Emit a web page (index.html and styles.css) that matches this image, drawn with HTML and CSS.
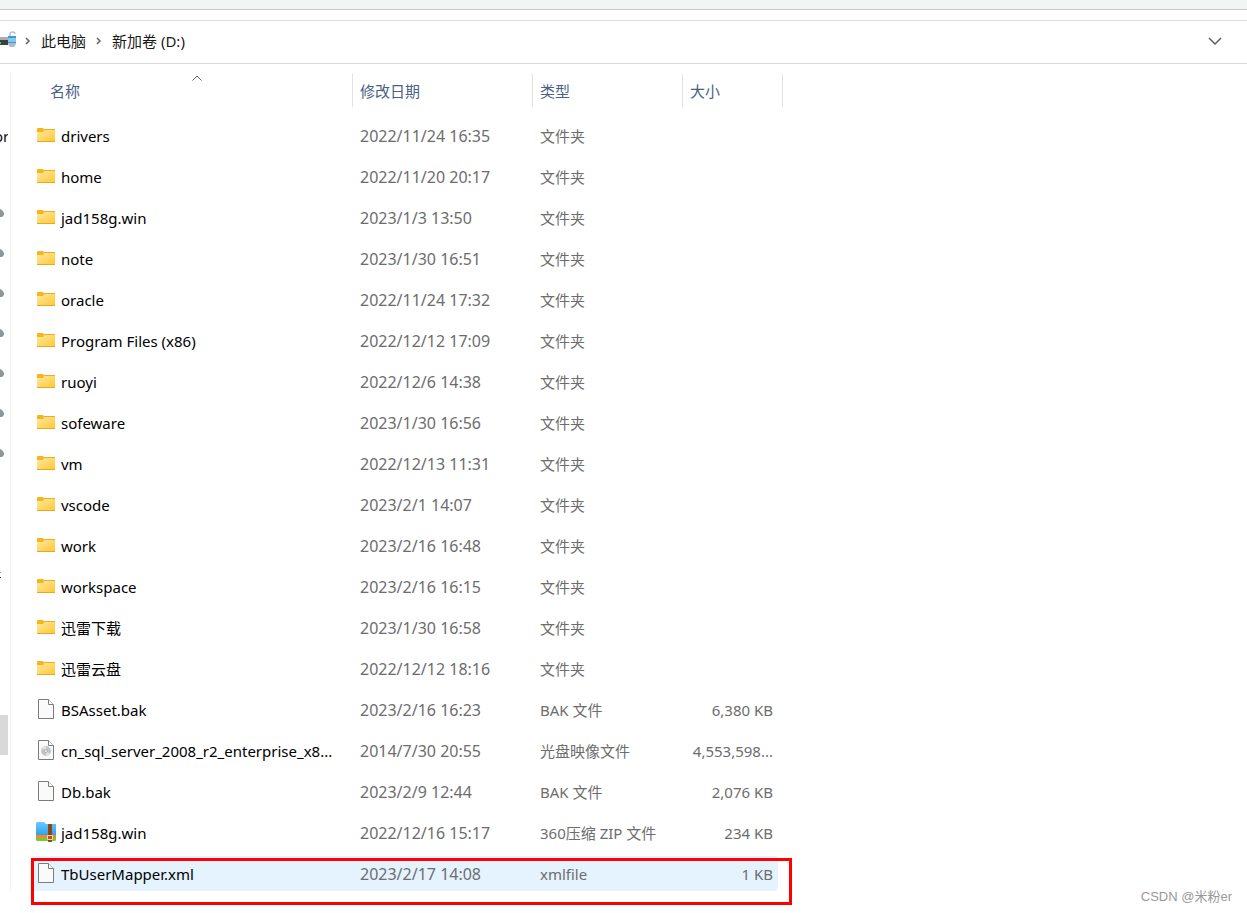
FILE: index.html
```html
<!DOCTYPE html>
<html lang="zh-CN">
<head>
<meta charset="utf-8">
<title>新加卷 (D:)</title>
<link rel="stylesheet" href="styles.css">
</head>
<body>
<svg class="defs" aria-hidden="true">
  <defs>
    <linearGradient id="folder-fill" x1="0" y1="0" x2="1" y2="1"><stop offset="0" stop-color="#ffe9a4"/><stop offset="1" stop-color="#ffc937"/></linearGradient>
    <linearGradient id="zip-fill" x1="0" y1="0" x2="0" y2="1"><stop offset="0" stop-color="#6cc8fb"/><stop offset="1" stop-color="#2da2f3"/></linearGradient>
    <symbol id="folder" viewBox="0 -1 20 20">
      <path d="M1 3q0-1 1-1h5l1 1.500V6H1z" fill="#f9b41c"/>
      <path d="M1 6h6l2-2.500h10V15H1z" fill="url(#folder-fill)"/>
      <path d="M8 3.500h11" stroke="#efae22" fill="none"/>
      <path d="M1 15.500h18" stroke="#e9a820" fill="none"/>
    </symbol>
    <symbol id="file" viewBox="0 0 20 20">
      <path d="M2.500.5h10l5 5v14h-15z" fill="#fafafa" stroke="#7c7c7c"/>
      <path d="M12.500.5v5h5" fill="#fff" stroke="#7c7c7c"/>
    </symbol>
    <symbol id="disc" viewBox="0 0 20 20">
      <path d="M2.500.5h10l5 5v14h-15z" fill="#fafafa" stroke="#7c7c7c"/>
      <path d="M12.500.5v5h5" fill="#fff" stroke="#7c7c7c"/>
      <circle cx="10" cy="11" r="5" fill="#c3c6c8"/>
      <path d="M10 11L6 8a5 5 0 0 1 4-2zM10 11l4 3a5 5 0 0 1-4 2z" fill="#e3e4e5"/>
      <circle cx="10" cy="11" r="1.500" fill="#fff" stroke="#aaa"/>
    </symbol>
    <symbol id="zip" viewBox="0 0 20 20">
      <path d="M0 2h20v15.500q0 1.500-1.500 1.500h-17Q0 19 0 17.500z" fill="#76c83c"/>
      <path d="M0 2h20v14H0z" fill="#f58a22"/>
      <path d="M0 1.500Q0 0 1.500 0H8l2 2h8.500Q20 2 20 3.500V13H0z" fill="url(#zip-fill)"/>
      <path d="M12 2h4v18h-4z" fill="#8f4a20"/>
      <path d="M14 3v10" stroke="#69330f" stroke-dasharray="1 1" fill="none"/>
      <path d="M11.500 13.500h5v4h-5z" fill="#a65a25" stroke="#f8d59a"/>
    </symbol>
    <symbol id="pin" viewBox="0 0 5 10"><path d="M0 1l2 1 2 3v2l-2 2H0z" fill="#8d969d"/></symbol>
  </defs>
</svg>

<div class="tabstrip"></div>
<div class="toolbar-gap"></div>
<header class="address">
  <svg class="drive" viewBox="0 0 17 18" aria-hidden="true">
    <path d="M0 6h8v3H0z" fill="#a9adb1"/><path d="M0 9h8v5H0z" fill="#3c3f42"/><path d="M0 11h1v2H0z" fill="#28e03b"/>
    <path d="M10 6V3q0-2 2.500-2T15 3" fill="none" stroke="#b9c3cb" stroke-width="1.500"/>
    <path d="M8 5h8v8l-2 3h-4l-2-3z" fill="#a9bccb"/><path d="M8 5h8v2H8zM8 11h8v1H8z" fill="#2d9ee4"/><path d="M8 7h8v4H8z" fill="#8fc5ea"/>
  </svg>
  <svg class="sep" viewBox="0 0 6 8" aria-hidden="true"><path d="M1 1l3 3-3 3"/></svg>
  <a class="crumb" href="#">此电脑</a>
  <svg class="sep" viewBox="0 0 6 8" aria-hidden="true"><path d="M1 1l3 3-3 3"/></svg>
  <a class="crumb" href="#">新加卷 (D:)</a>
  <button class="history" type="button" aria-label="以前的位置"><svg viewBox="0 0 14 8" aria-hidden="true"><path d="M1 1l6 6 6-6"/></svg></button>
</header>

<div class="body">
  <nav class="side">
    <div class="side-item"><span>or</span></div>
    <div class="pins">
      <div class="side-item"><svg><use href="#pin"/></svg></div>
      <div class="side-item"><svg><use href="#pin"/></svg></div>
      <div class="side-item"><svg><use href="#pin"/></svg></div>
      <div class="side-item"><svg><use href="#pin"/></svg></div>
      <div class="side-item"><svg><use href="#pin"/></svg></div>
      <div class="side-item"><svg><use href="#pin"/></svg></div>
      <div class="side-item"><svg><use href="#pin"/></svg></div>
    </div>
    <div class="side-item device"><i></i></div>
    <div class="side-item current"></div>
  </nav>

  <main class="files">
    <div class="list">
      <table>
        <colgroup><col class="c-name"><col class="c-date"><col class="c-type"><col class="c-size"></colgroup>
        <thead><tr>
          <th><div class="head name-head">名称<svg class="sort" viewBox="0 0 10 6" aria-hidden="true"><path d="M.5 5.500L5 1l4.500 4.500"/></svg></div></th>
          <th><div class="head">修改日期</div></th><th><div class="head">类型</div></th><th><div class="head">大小</div></th>
        </tr></thead>
        <tbody>
          <tr><td><div class="name"><svg><use href="#folder"/></svg><span>drivers</span></div></td><td class="date">2022/11/24 16:35</td><td>文件夹</td><td></td></tr>
          <tr><td><div class="name"><svg><use href="#folder"/></svg><span>home</span></div></td><td class="date">2022/11/20 20:17</td><td>文件夹</td><td></td></tr>
          <tr><td><div class="name"><svg><use href="#folder"/></svg><span>jad158g.win</span></div></td><td class="date">2023/1/3 13:50</td><td>文件夹</td><td></td></tr>
          <tr><td><div class="name"><svg><use href="#folder"/></svg><span>note</span></div></td><td class="date">2023/1/30 16:51</td><td>文件夹</td><td></td></tr>
          <tr><td><div class="name"><svg><use href="#folder"/></svg><span>oracle</span></div></td><td class="date">2022/11/24 17:32</td><td>文件夹</td><td></td></tr>
          <tr><td><div class="name"><svg><use href="#folder"/></svg><span>Program Files (x86)</span></div></td><td class="date">2022/12/12 17:09</td><td>文件夹</td><td></td></tr>
          <tr><td><div class="name"><svg><use href="#folder"/></svg><span>ruoyi</span></div></td><td class="date">2022/12/6 14:38</td><td>文件夹</td><td></td></tr>
          <tr><td><div class="name"><svg><use href="#folder"/></svg><span>sofeware</span></div></td><td class="date">2023/1/30 16:56</td><td>文件夹</td><td></td></tr>
          <tr><td><div class="name"><svg><use href="#folder"/></svg><span>vm</span></div></td><td class="date">2022/12/13 11:31</td><td>文件夹</td><td></td></tr>
          <tr><td><div class="name"><svg><use href="#folder"/></svg><span>vscode</span></div></td><td class="date">2023/2/1 14:07</td><td>文件夹</td><td></td></tr>
          <tr><td><div class="name"><svg><use href="#folder"/></svg><span>work</span></div></td><td class="date">2023/2/16 16:48</td><td>文件夹</td><td></td></tr>
          <tr><td><div class="name"><svg><use href="#folder"/></svg><span>workspace</span></div></td><td class="date">2023/2/16 16:15</td><td>文件夹</td><td></td></tr>
          <tr><td><div class="name"><svg><use href="#folder"/></svg><span>迅雷下载</span></div></td><td class="date">2023/1/30 16:58</td><td>文件夹</td><td></td></tr>
          <tr><td><div class="name"><svg><use href="#folder"/></svg><span>迅雷云盘</span></div></td><td class="date">2022/12/12 18:16</td><td>文件夹</td><td></td></tr>
          <tr><td><div class="name"><svg><use href="#file"/></svg><span>BSAsset.bak</span></div></td><td class="date">2023/2/16 16:23</td><td>BAK 文件</td><td>6,380 KB</td></tr>
          <tr><td><div class="name"><svg><use href="#disc"/></svg><span>cn_sql_server_2008_r2_enterprise_x8...</span></div></td><td class="date">2014/7/30 20:55</td><td>光盘映像文件</td><td>4,553,598...</td></tr>
          <tr><td><div class="name"><svg><use href="#file"/></svg><span>Db.bak</span></div></td><td class="date">2023/2/9 12:44</td><td>BAK 文件</td><td>2,076 KB</td></tr>
          <tr><td><div class="name"><svg><use href="#zip"/></svg><span>jad158g.win</span></div></td><td class="date">2022/12/16 15:17</td><td>360压缩 ZIP 文件</td><td>234 KB</td></tr>
          <tr class="active"><td><div class="name"><svg><use href="#file"/></svg><span>TbUserMapper.xml</span></div></td><td class="date">2023/2/17 14:08</td><td>xmlfile</td><td>1 KB</td></tr>
        </tbody>
      </table>
      <div class="callout"></div>
    </div>
  </main>
</div>
<div class="watermark">CSDN @米粉er</div>
</body>
</html>
```
FILE: styles.css
```css
* { box-sizing: border-box; }
body {
  position: relative;
  min-height: 100vh;
  margin: 0;
  background: #fff;
  color: #111;
  font: 15px/20px "Noto Sans", "Noto Sans CJK SC", sans-serif;
}
svg { display: block; flex: none; }
.defs { position: absolute; width: 0; height: 0; }

.tabstrip { height: 10px; background: #f3f4f4; border-bottom: 1px solid #c9cbcb; }
.toolbar-gap { height: 11px; border-bottom: 1px solid #dcdcdc; }
.address {
  display: flex;
  align-items: center;
  height: 43px;
  padding: 0 25px 2px 0;
  border-bottom: 1px solid #d9d9d9;
}
.drive { width: 17px; height: 18px; margin: 0 8px 2px 0; }
.sep { width: 6px; height: 8px; fill: none; stroke: #666; stroke-width: 1.5; }
.crumb { margin: 0 10px; color: #1a1a1a; text-decoration: none; }
.history { margin-left: auto; padding: 0; border: 0; background: none; }
.history svg { width: 14px; height: 8px; fill: none; stroke: #5f5f64; stroke-width: 1.5; }

.body { display: flex; align-items: flex-start; }
.side { flex: none; width: 11px; height: 817px; margin-top: 10px; padding-top: 42px; border-right: 1px solid #f3f3f3; }
.side-item { display: flex; align-items: center; width: 8px; height: 40px; overflow: hidden; }
.side-item span { flex: none; margin-left: -6px; }
.side-item svg { width: 5px; height: 10px; }
.pins { margin-top: 37px; }
.device { margin-top: 82px; }
.device i { width: 1px; height: 6px; border-top: 1px solid #4fb3f5; border-bottom: 1px solid #12357a; }
.current { margin-top: 120px; background: #d9d9d9; }

.files { flex: 1; padding-left: 20px; }
.list { position: relative; width: 761px; padding: 4px 0 8px; }
table { width: 752px; table-layout: fixed; border-collapse: separate; border-spacing: 0 6px; }
.c-name { width: 322px; }
.c-date { width: 180px; }
.c-type { width: 150px; }
th, td { padding: 0; text-align: left; font-weight: 400; white-space: nowrap; }
th { height: 38px; vertical-align: top; }
.head {
  display: flex;
  align-items: center;
  height: 33px;
  padding: 0 0 0 7px;
  border-right: 1px solid #e2e2e2;
  color: #4a6184;
}
.name-head { position: relative; padding-left: 19px; }
.sort { position: absolute; left: 161px; top: 1px; width: 10px; height: 6px; fill: none; stroke: #666; }
td { height: 35px; padding: 1px 0 0 7px; color: #6d6d6d; }
td:first-child { padding: 0 0 0 5px; color: #000; }
td:last-child { padding: 1px 5px 0 0; border-right: 5px solid transparent; background-clip: padding-box; text-align: right; }
.name { display: flex; align-items: center; gap: 5px; }
.name svg { width: 20px; height: 20px; margin-bottom: 2px; }
.date { font-size: 16px; }
.active td { background-color: #e5f3fe; }
.active td:first-child { border-radius: 3px 0 0 3px; }
.active td:last-child { border-radius: 0 7px 7px 0; }
.callout { position: absolute; left: 0; right: 0; bottom: 0; height: 47px; border: 3px solid #fe0000; }

.watermark { position: absolute; right: 15px; bottom: 6px; color: #999; font: 13px/20px "Liberation Sans", "Noto Sans CJK SC", sans-serif; }
```
